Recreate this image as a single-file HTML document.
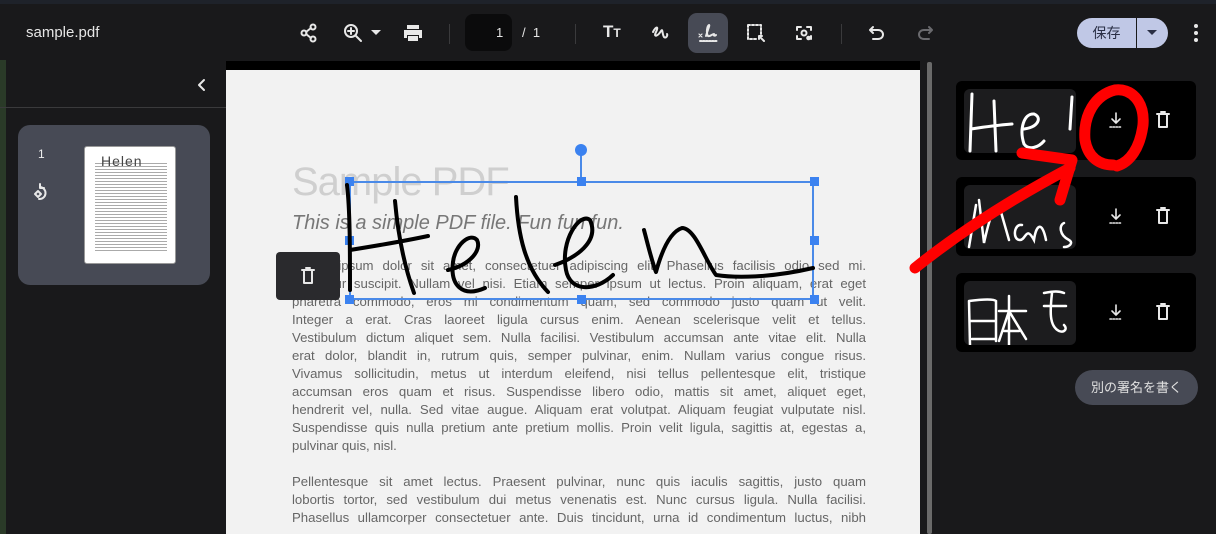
<!DOCTYPE html>
<html><head><meta charset="utf-8"><style>
*{margin:0;padding:0;box-sizing:border-box}
body{width:1216px;height:534px;overflow:hidden;background:#19191b;font-family:"Liberation Sans","Noto Sans CJK JP",sans-serif;position:relative}
.abs{position:absolute}
.top{left:0;top:0;width:1216px;height:60px;background:#19191b;border-top:4px solid #1e222a}
.ic{position:absolute;fill:none;stroke:#e8e8e8;stroke-width:2;stroke-linecap:round;stroke-linejoin:round}
.page{left:226px;top:61px;width:694px;height:473px;background:#f2f2f2;border-top:9px solid #000}
.ln{position:absolute;left:66px;width:574px;font-size:13.2px;color:#666;text-align:justify;text-align-last:justify;white-space:nowrap;line-height:18px}
.ln.last{text-align-last:left}
.card{position:absolute;left:956px;width:240px;height:79px;background:#000;border-radius:6px}
.sig{position:absolute;left:8px;top:8px;width:112px;height:64px;background:#1c1c1e;border-radius:6px;overflow:hidden}
.h{position:absolute;width:9px;height:9px;background:#3b82f0}
</style></head><body>
<div class="abs top"></div>
<div class="abs" style="left:26px;top:24px;color:#e6e6e6;font-size:15px">sample.pdf</div>
<svg class="ic" style="left:298px;top:22px" width="22" height="22" viewBox="0 0 22 22"><circle cx="15" cy="5" r="2.5"/><circle cx="6" cy="11" r="2.5"/><circle cx="15" cy="17" r="2.5"/><path d="M8 10 L13 6 M8 12 L13 16"/></svg>
<svg class="ic" style="left:342px;top:22px" width="22" height="22" viewBox="0 0 22 22"><circle cx="9" cy="9" r="6"/><path d="M14 14 L19 19 M9 6 V12 M6 9 H12"/></svg>
<svg class="abs" style="left:370px;top:29px" width="12" height="8"><path d="M1 1 H11 L6 6Z" fill="#e8e8e8"/></svg>
<svg class="abs" style="left:402px;top:23px" width="22" height="20" viewBox="0 0 22 20"><path d="M5 2 H17 V6 H5Z M2 7 H20 V15 H17 V12 H5 V15 H2Z M6 13 H16 V18 H6Z" fill="#e8e8e8"/></svg>
<div class="abs" style="left:449px;top:24px;width:1px;height:20px;background:#3a3a3c"></div>
<div class="abs" style="left:465px;top:14px;width:47px;height:37px;background:#0b0b0c;border-radius:8px"></div>
<div class="abs" style="left:496px;top:25px;color:#e6e6e6;font-size:13px">1</div>
<div class="abs" style="left:522px;top:25px;color:#e6e6e6;font-size:13px">/ &nbsp;1</div>
<div class="abs" style="left:575px;top:24px;width:1px;height:20px;background:#3a3a3c"></div>
<div class="abs" style="left:603px;top:22px;color:#e8e8e8;font-size:17px;font-weight:bold">T<span style="font-size:12px">T</span></div>
<svg class="ic" style="left:650px;top:22px" width="22" height="22" viewBox="0 0 22 22"><path d="M3 10 C6 4 9 4 6 10 C3 16 8 14 11 9 C13 6 12 12 14 15 C16 17 18 13 17 12"/></svg>
<div class="abs" style="left:688px;top:13px;width:40px;height:40px;background:#474a55;border-radius:9px"></div>
<svg class="ic" style="left:696px;top:21px" width="24" height="24" viewBox="0 0 24 24"><path d="M10 15 C12 8 14 4 13 4 C11 5 10 12 12 15 C14 16 16 13 18 13 C17 15 19 15 20 14"/><path d="M4 20 H21" stroke-dasharray="1.5 1.5"/><path d="M3 13 L6 16 M6 13 L3 16" stroke-width="1.2"/></svg>
<svg class="ic" style="left:745px;top:22px" width="22" height="22" viewBox="0 0 22 22"><path d="M3 3 H16 V12 M3 3 V17 H12" stroke-dasharray="2 2"/><path d="M14 14 L19 19 M14 14 H17 M14 14 V17"/></svg>
<svg class="ic" style="left:793px;top:22px" width="22" height="22" viewBox="0 0 22 22"><path d="M4 8 V5 H8 M14 5 H18 V8 M4 14 V17 H8 M18 14 V17"/><circle cx="11" cy="11" r="2.5"/><circle cx="15.5" cy="16" r="1.3" fill="#e8e8e8"/></svg>
<div class="abs" style="left:841px;top:24px;width:1px;height:20px;background:#3a3a3c"></div>
<svg class="ic" style="left:866px;top:22px" width="22" height="22" viewBox="0 0 22 22"><path d="M7 5 L4 8 L7 11 M4 8 H12 C15 8 17 10 17 12.5 C17 15 15 17 12 17 H7"/></svg>
<svg class="ic" style="left:914px;top:22px;stroke:#6a6a6e" width="22" height="22" viewBox="0 0 22 22"><path d="M15 5 L18 8 L15 11 M18 8 H10 C7 8 5 10 5 12.5 C5 15 7 17 10 17 H15"/></svg>
<div class="abs" style="left:1077px;top:18px;width:59px;height:30px;background:#c0c8e6;border-radius:15px 0 0 15px;color:#2a2f45;font-size:14px;text-align:center;line-height:30px">保存</div>
<div class="abs" style="left:1136px;top:18px;width:32px;height:30px;background:#c0c8e6;border-radius:0 15px 15px 0;border-left:1px solid #1a1a1a"></div>
<svg class="abs" style="left:1146px;top:29px" width="12" height="8"><path d="M1 1 H11 L6 6Z" fill="#2a2f45"/></svg>
<div class="abs" style="left:1194px;top:24px;width:4px;height:4px;border-radius:2px;background:#e8e8e8;box-shadow:0 7px 0 #e8e8e8,0 14px 0 #e8e8e8"></div>

<div class="abs" style="left:0;top:60px;width:6px;height:474px;background:#2a3a28"></div>
<div class="abs" style="left:0;top:107px;width:226px;height:1px;background:#3a3a3c"></div>
<svg class="ic" style="left:196px;top:78px" width="12" height="14"><path d="M8 2 L3 7 L8 12"/></svg>
<div class="abs" style="left:18px;top:125px;width:192px;height:160px;background:#474a55;border-radius:12px"></div>
<div class="abs" style="left:38px;top:147px;color:#eee;font-size:12px">1</div>
<svg class="ic" style="left:32px;top:183px" width="20" height="20" viewBox="0 0 20 20"><path d="M8 4 A6 6 0 1 1 7 16"/><path d="M8 1 V5 H12" /><path d="M3 11 L6 8 L9 11 L6 14Z"/></svg>
<div class="abs" style="left:84px;top:146px;width:92px;height:118px;background:#fff;border-radius:3px;border:1px solid #999;overflow:hidden">
<div style="margin:14px 8px 0 10px;height:90px;background:repeating-linear-gradient(#fff 0,#fff 2px,#aaa 2px,#aaa 3px)"></div>
<div style="position:absolute;left:16px;top:6px;font-size:14px;color:#444;letter-spacing:1px">Helen</div>
</div>

<div class="abs page">
<div class="abs" style="left:66px;top:90px;font-size:40px;color:#cfcfcf;letter-spacing:-1px">Sample PDF</div>
<div class="abs" style="left:66px;top:142px;font-size:20px;color:#777;font-style:italic">This is a simple PDF file. Fun fun fun.</div>
<div class="ln" style="top:187px">Lorem ipsum dolor sit amet, consectetuer adipiscing elit. Phasellus facilisis odio sed mi.</div>
<div class="ln" style="top:205px">Curabitur suscipit. Nullam vel nisi. Etiam semper ipsum ut lectus. Proin aliquam, erat eget</div>
<div class="ln" style="top:223px">pharetra commodo, eros mi condimentum quam, sed commodo justo quam ut velit.</div>
<div class="ln" style="top:241px">Integer a erat. Cras laoreet ligula cursus enim. Aenean scelerisque velit et tellus.</div>
<div class="ln" style="top:259px">Vestibulum dictum aliquet sem. Nulla facilisi. Vestibulum accumsan ante vitae elit. Nulla</div>
<div class="ln" style="top:277px">erat dolor, blandit in, rutrum quis, semper pulvinar, enim. Nullam varius congue risus.</div>
<div class="ln" style="top:295px">Vivamus sollicitudin, metus ut interdum eleifend, nisi tellus pellentesque elit, tristique</div>
<div class="ln" style="top:313px">accumsan eros quam et risus. Suspendisse libero odio, mattis sit amet, aliquet eget,</div>
<div class="ln" style="top:331px">hendrerit vel, nulla. Sed vitae augue. Aliquam erat volutpat. Aliquam feugiat vulputate nisl.</div>
<div class="ln" style="top:349px">Suspendisse quis nulla pretium ante pretium mollis. Proin velit ligula, sagittis at, egestas a,</div>
<div class="ln last" style="top:367px">pulvinar quis, nisl.</div>
<div class="ln" style="top:403px">Pellentesque sit amet lectus. Praesent pulvinar, nunc quis iaculis sagittis, justo quam</div>
<div class="ln" style="top:421px">lobortis tortor, sed vestibulum dui metus venenatis est. Nunc cursus ligula. Nulla facilisi.</div>
<div class="ln" style="top:439px">Phasellus ullamcorper consectetuer ante. Duis tincidunt, urna id condimentum luctus, nibh</div>
</div>
<div class="abs" style="left:927px;top:62px;width:5px;height:472px;background:#6a6a6a;border-radius:2px"></div>

<div class="abs" style="left:349px;top:181px;width:465px;height:119px;border:2px solid #4a8ae8"></div>
<div class="abs" style="left:580px;top:155px;width:2px;height:26px;background:#4a8ae8"></div>
<div class="abs" style="left:575px;top:144px;width:12px;height:12px;border-radius:6px;background:#3b82f0"></div>
<div class="h" style="left:345px;top:177px"></div><div class="h" style="left:577px;top:177px"></div><div class="h" style="left:810px;top:177px"></div>
<div class="h" style="left:345px;top:236px"></div><div class="h" style="left:810px;top:236px"></div>
<div class="h" style="left:345px;top:295px"></div><div class="h" style="left:577px;top:295px"></div><div class="h" style="left:810px;top:295px"></div>
<svg class="abs" style="left:0;top:0" width="1216" height="534" fill="none" stroke="#000" stroke-width="4" stroke-linecap="round" stroke-linejoin="round">
<path d="M347 185 C350 210 350 250 350 290"/>
<path d="M395 201 C398 235 404 265 414 293"/>
<path d="M350 250 C375 246 400 242 428 236"/>
<path d="M448 270 C470 265 482 250 477 240 C470 232 455 245 453 262 C450 285 462 298 485 288"/>
<path d="M516 197 C518 235 525 268 548 292"/>
<path d="M555 265 C575 258 600 242 590 220 C580 212 560 240 566 270 C570 292 595 292 613 275"/>
<path d="M644 230 C648 245 652 262 656 272 C662 250 670 232 682 228 C695 228 705 260 716 275 C735 278 770 278 813 268"/>
</svg>
<div class="abs" style="left:276px;top:252px;width:64px;height:48px;background:#2a2a2d;border-radius:4px"></div>
<svg class="ic" style="left:300px;top:267px" width="16" height="18" viewBox="0 0 16 18"><path d="M2 3 H14 M4 3 V16 H12 V3 M6 1 H10"/></svg>

<div class="card" style="top:81px"><div class="sig"><svg width="112" height="64" fill="none" stroke="#fff" stroke-width="3" stroke-linecap="round"><path d="M8 5 L6 62 M7 40 C20 38 35 36 48 35 M30 12 L32 62 M60 40 C75 38 78 28 70 25 C60 24 55 40 60 55 C65 62 75 58 80 52 M108 8 L106 40"/></svg></div></div>
<div class="card" style="top:177px"><div class="sig"><svg width="112" height="64" fill="none" stroke="#fff" stroke-width="2.5" stroke-linecap="round"><path d="M12 20 L5 62 M15 15 L20 58 C25 35 30 20 35 20 L45 55 M58 40 C50 38 48 55 56 55 C62 55 62 40 70 55 C72 40 78 35 82 55 M100 38 C95 40 95 50 105 55 C110 58 105 62 100 62"/></svg></div></div>
<div class="card" style="top:273px"><div class="sig"><svg width="112" height="64" fill="none" stroke="#fff" stroke-width="2.5" stroke-linecap="round"><path d="M5 20 L6 64 M5 20 C20 18 30 18 32 20 L32 60 M6 40 H32 M8 58 H32 M45 15 L45 64 M35 30 H62 M45 30 L35 60 M45 30 L62 58 M40 50 H55 M80 12 C90 10 95 10 100 12 M80 25 H102 M88 12 C86 30 85 45 95 50 C100 52 104 48 100 44"/></svg></div></div>
<svg class="ic" style="left:1107px;top:111px;stroke-width:1.6" width="18" height="20" viewBox="0 0 18 20"><path d="M9 2 V11 M5 8 L9 12 L13 8"/><path d="M3 16 H15" stroke-dasharray="1.5 1.5"/></svg>
<svg class="ic" style="left:1107px;top:207px;stroke-width:1.6" width="18" height="20" viewBox="0 0 18 20"><path d="M9 2 V11 M5 8 L9 12 L13 8"/><path d="M3 16 H15" stroke-dasharray="1.5 1.5"/></svg>
<svg class="ic" style="left:1107px;top:303px;stroke-width:1.6" width="18" height="20" viewBox="0 0 18 20"><path d="M9 2 V11 M5 8 L9 12 L13 8"/><path d="M3 16 H15" stroke-dasharray="1.5 1.5"/></svg>
<svg class="ic" style="left:1155px;top:111px" width="16" height="18" viewBox="0 0 16 18"><path d="M2 3 H14 M4 3 V16 H12 V3 M6 1 H10"/></svg>
<svg class="ic" style="left:1155px;top:207px" width="16" height="18" viewBox="0 0 16 18"><path d="M2 3 H14 M4 3 V16 H12 V3 M6 1 H10"/></svg>
<svg class="ic" style="left:1155px;top:303px" width="16" height="18" viewBox="0 0 16 18"><path d="M2 3 H14 M4 3 V16 H12 V3 M6 1 H10"/></svg>
<div class="abs" style="left:1075px;top:370px;width:123px;height:35px;background:#474a55;border-radius:18px;color:#e0e0e0;font-size:13px;text-align:center;line-height:35px">別の署名を書く</div>

<svg class="abs" style="left:0;top:0" width="1216" height="534" fill="none" stroke="#ff0000" stroke-width="11" stroke-linecap="round" stroke-linejoin="round">
<path d="M1117 166 C1130 162 1140 148 1143 125 C1145 100 1130 88 1115 90 C1095 95 1083 115 1085 140 C1088 158 1100 165 1113 165"/>
<path d="M915 268 C950 240 1000 205 1070 168"/>
<path d="M1022 153 L1072 160 L1060 200"/>
</svg>
</body></html>
